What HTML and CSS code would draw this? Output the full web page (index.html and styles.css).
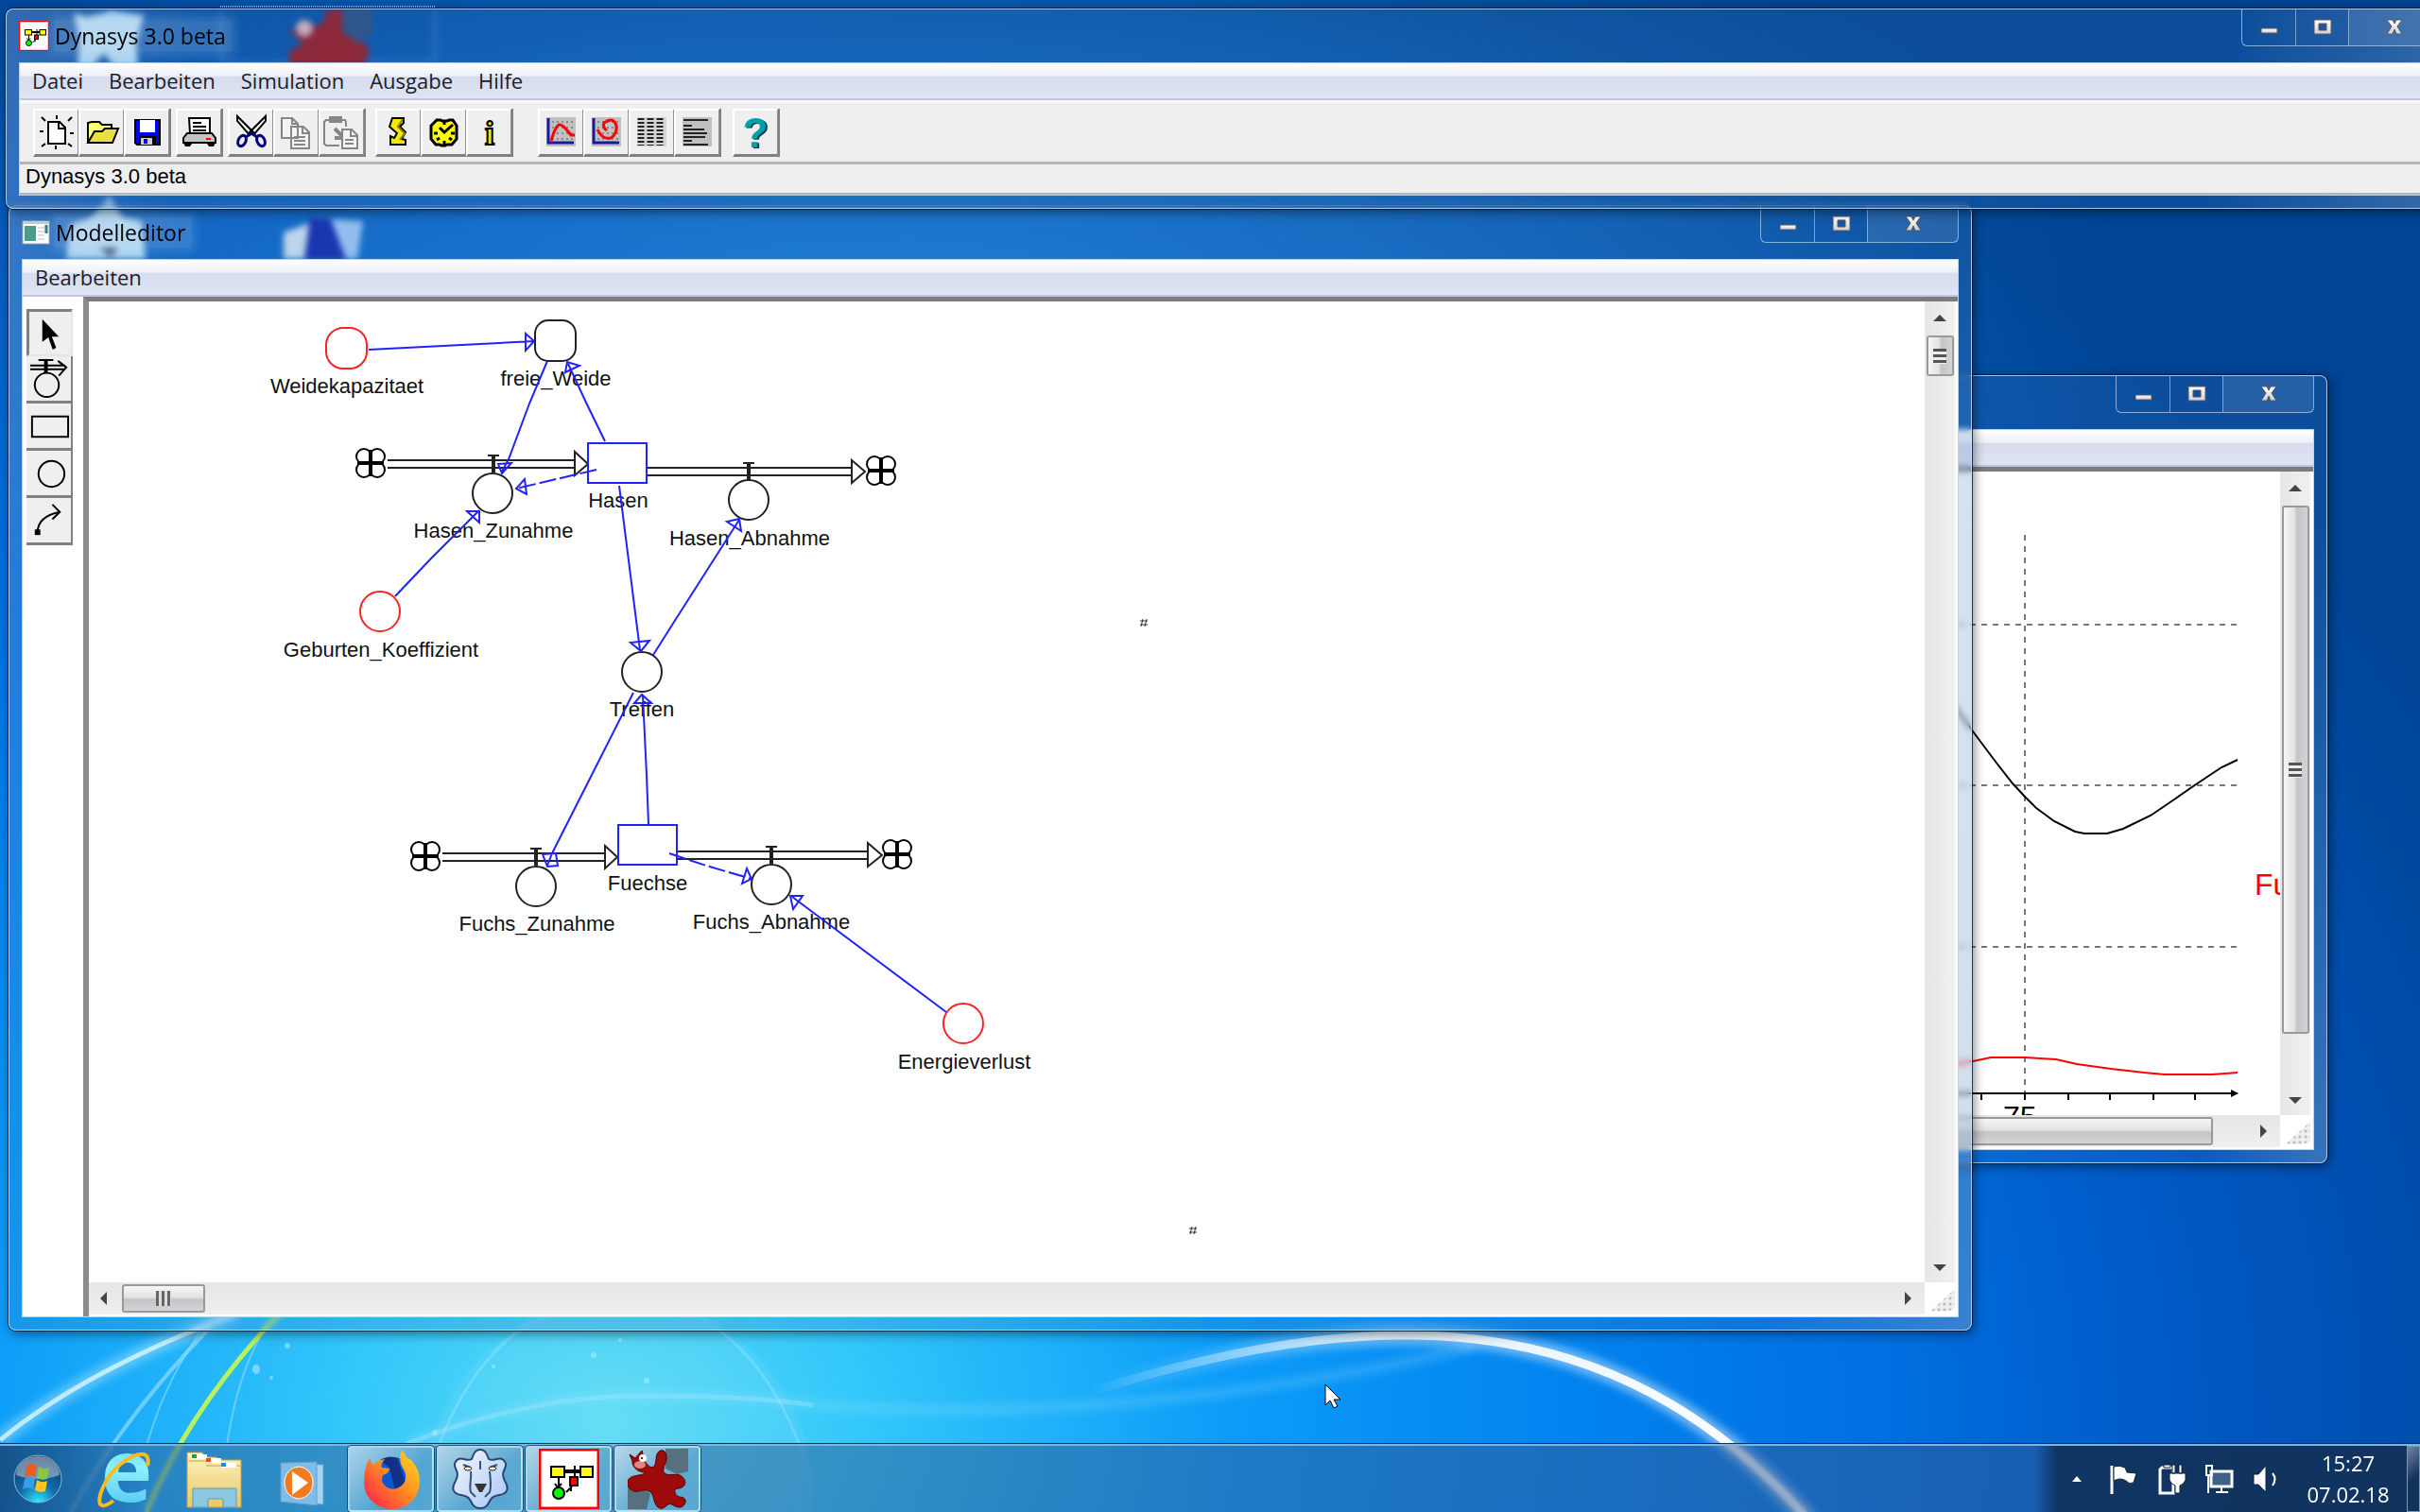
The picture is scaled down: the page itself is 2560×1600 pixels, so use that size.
FILE: index.html
```
<!DOCTYPE html>
<html lang="de">
<head>
  <meta charset="UTF-8">
  <title>Dynasys 3.0 beta</title>
  <link rel="stylesheet" href="styles.css">
</head>
<body>

  <!-- shared icons -->
  <svg class="defs" aria-hidden="true">
    <defs>
      <linearGradient id="metal" x1="0" y1="0" x2="0" y2="1"><stop offset="0" stop-color="#fff"/><stop offset="1" stop-color="#cfd0d2"/></linearGradient>
      <linearGradient id="curveLight" x1="0" y1="0" x2="1" y2="0"><stop offset="0" stop-color="#fff" stop-opacity="0"/><stop offset="0.4" stop-color="#fff" stop-opacity="0.8"/><stop offset="1" stop-color="#fff"/></linearGradient>
      <radialGradient id="orb" cx="0.5" cy="1" r="0.9"><stop offset="0" stop-color="#2ff0ff"/><stop offset="0.45" stop-color="#0f6fae"/><stop offset="1" stop-color="#123a66"/></radialGradient>
      <linearGradient id="fox" x1="1" y1="0" x2="0" y2="1"><stop offset="0" stop-color="#ffe226"/><stop offset="0.45" stop-color="#ff9020"/><stop offset="1" stop-color="#ff1650"/></linearGradient>
      <linearGradient id="lionFur" x1="0" y1="0" x2="1" y2="1"><stop offset="0" stop-color="#f4f8ff"/><stop offset="1" stop-color="#a8c6f4"/></linearGradient>
      <linearGradient id="folder" x1="0" y1="0" x2="0" y2="1"><stop offset="0" stop-color="#fff3c0"/><stop offset="1" stop-color="#e6c766"/></linearGradient>
      <linearGradient id="ie" x1="0" y1="0" x2="0" y2="1"><stop offset="0" stop-color="#46b8f0"/><stop offset="0.5" stop-color="#8ff0ff"/><stop offset="1" stop-color="#38b4ee"/></linearGradient>
      <filter id="soft"><feGaussianBlur stdDeviation="5"/></filter>
      <symbol id="min" viewBox="0 0 22 20"><rect x="3" y="11" width="17" height="5" fill="url(#metal)" stroke="#5a5560"/></symbol>
      <symbol id="max" viewBox="0 0 22 20"><path d="M2 2h18v15H2zM7 6v7h8V6z" fill="url(#metal)" fill-rule="evenodd" stroke="#5a5560"/></symbol>
      <symbol id="close" viewBox="0 0 22 20"><path d="M3 2h6l2 4 2-4h6l-5 7 5 8h-6l-2-5-2 5H3l5-8z" fill="url(#metal)" stroke="#5a5560"/></symbol>
      <symbol id="cloud" viewBox="-17 -17 34 34">
        <g fill="#fff" stroke="#000" stroke-width="2"><circle cx="-7" cy="-7" r="8"/><circle cx="7" cy="-7" r="8"/><circle cx="-7" cy="7" r="8"/><circle cx="7" cy="7" r="8"/></g>
        <path d="M-7-7h14v14H-7z" fill="#fff"/><path d="M0-14v28M-14 0h28" stroke="#000" stroke-width="4"/>
      </symbol>
      <symbol id="mark" viewBox="0 0 10 10"><path d="M4 1L2 9M8 1L6 9M1 3h8M1 7h8" stroke="#333" stroke-width="1" fill="none"/></symbol>
      <symbol id="dynasys" viewBox="0 0 64 64">
        <rect x="1" y="1" width="62" height="62" fill="#fff" stroke="#f00" stroke-width="3"/>
        <path d="M27 24h18M21 30v16M38 18v14M29 46l6-6M17 37l3 4 4-4M34 40v5" stroke="#000" stroke-width="2" fill="none"/><path d="M27 24h17" stroke="#000" stroke-width="4"/>
        <rect x="13" y="19" width="14" height="11" fill="#ff0" stroke="#000" stroke-width="2"/><rect x="44" y="19" width="13" height="11" fill="#ff0" stroke="#000" stroke-width="2"/>
        <rect x="33" y="30" width="8" height="9" fill="#f00" stroke="#000" stroke-width="2"/><ellipse cx="21" cy="47" rx="6" ry="6" fill="#0f0" stroke="#000" stroke-width="2"/>
      </symbol>
      <symbol id="lion" viewBox="0 0 60 64">
        <path d="M30 1c5 0 7 4 9 10 5 3 9-2 14 0 4 2 5 6 3 10-2 4-3 7 0 13 3 5 4 9 1 12-3 4-9 2-13 5-4 2-4 5-6 8-2 3-4 4-8 4s-6-1-8-4c-2-3-2-6-6-8-4-3-10-1-13-5-3-3-2-7 1-12 3-6 2-9 0-13-2-4-1-8 3-10 5-2 9 3 14 0 2-6 4-10 9-10z" fill="url(#lionFur)" stroke="#2b4470" stroke-width="2"/>
        <path d="M20 24c1 8-2 16 0 22l5 5M40 24c1 8 2 16 0 22l-5 5M30 13v9M12 17l8 3M48 17l-8 3" stroke="#34507c" stroke-width="2" fill="none"/>
        <ellipse cx="17" cy="21" rx="4" ry="2" fill="#f4f0c8" stroke="#222"/><ellipse cx="43" cy="21" rx="4" ry="2" fill="#f4f0c8" stroke="#222"/>
        <path d="M24 37h13l-5 9h-3z" fill="#333"/>
      </symbol>
      <symbol id="devil" viewBox="0 0 64 64">
        <path d="M40 0h24v24l-12 3-12-6zM0 40l14-4 10 12-4 16H0z" fill="#56707f"/>
        <path d="M2 6l6 4 7-8 3 11c3 4 5 8 10 6 3-5 1-13 5-16 5-4 9 2 8 8-1 6-4 9-3 14 5 6 14-1 20 5 5 5 3 11-4 12-7 0-4 7 0 9 6 0 9 3 6 8-3 5-9 3-13 0-6-3-8 8-15 3-6-6-3-13-9-17-6-4-13 4-20-2-6-6-3-13 4-14 7-2 10-1 11-4-9 0-14-8-13-12z" fill="#9c0a0a" stroke="#5c0000"/>
        <ellipse cx="13" cy="17" rx="6" ry="4" fill="#d88"/><circle cx="16" cy="10" r="4" fill="#fff"/><circle cx="15" cy="10" r="1" fill="#000"/>
      </symbol>
    </defs>
  </svg>

  <div class="desktop">
    <svg class="wallpaper" aria-hidden="true">
      <circle cx="655" cy="1580" r="205" fill="#fff" opacity="0.06"/>
      <path d="M460 1540Q520 1375 655 1375T850 1540" stroke="#c8f4ff" stroke-width="3" opacity="0.25" fill="none"/>
      <path d="M430 1528Q560 1477 680 1477T860 1487Q1200 1510 1560 1425" stroke="#9fe4ff" stroke-width="10" opacity="0.25" fill="none" filter="url(#soft)"/>
      <path d="M430 1528Q560 1477 680 1477T860 1487" stroke="#9fe4ff" stroke-width="5" opacity="0.4" fill="none"/>
      <path d="M0 1524Q90 1450 250 1390" stroke="#c8f2ff" stroke-width="16" opacity="0.4" fill="none" filter="url(#soft)"/>
      <path d="M0 1524Q90 1450 250 1390" stroke="#d8f6ff" stroke-width="5" fill="none" opacity="0.8"/>
      <path d="M75 1600Q130 1500 222 1405" stroke="#8fdcff" stroke-width="4" fill="none" opacity="0.7"/>
      <path d="M155 1530Q175 1460 215 1405M240 1530Q250 1460 275 1415" stroke="#8fdcff" stroke-width="2" fill="none" opacity="0.6"/>
      <path d="M155 1600Q200 1490 300 1385" stroke="#b8f060" stroke-width="5" fill="none"/>
      <path d="M1150 1474C1500 1362 1730 1402 1915 1610" stroke="url(#curveLight)" stroke-width="20" opacity="0.5" fill="none" filter="url(#soft)"/>
      <path d="M1150 1474C1500 1362 1730 1402 1915 1610" stroke="url(#curveLight)" stroke-width="9" fill="none"/>
      <g fill="#aee8ff" opacity="0.6"><ellipse cx="271" cy="1449" rx="4" ry="5"/><circle cx="287" cy="1458" r="2"/><circle cx="304" cy="1424" r="3"/><circle cx="628" cy="1434" r="3"/><circle cx="656" cy="1418" r="2"/><circle cx="684" cy="1461" r="3"/><circle cx="522" cy="1446" r="2"/><circle cx="460" cy="1516" r="3"/></g>
      <!-- desktop shortcuts seen through the glass -->
      <path d="M234 12V66H460V12" stroke="#fff" stroke-width="2" opacity="0.25" fill="rgba(0,0,0,0.12)"/>
      <path d="M233 7h227" stroke="#d8a860" stroke-width="2" stroke-dasharray="1 1"/>
      <path d="M78 14l14 4 26-6 34 4-8 30 2 24h-26l-10-14-12 14H82l2-26z" fill="#c4ecff"/>
      <path d="M302 30l12 4 8-14 10 8 10-4 3-12 16-2 4 26 14 4 12 12-6 20h-80l2-18 14-8z" fill="#a0151a"/><path d="M362 10h32v26l-14 10-18-12z" fill="#2c4f80"/><circle cx="322" cy="30" r="9" fill="#e6b7bd"/>
      <path d="M116 208l14 22 20 4 4 40H70l4-36 22-8z" fill="#c4ecff"/><path d="M105 262h20l-8 10z" fill="#345"/>
      <path d="M300 246l28-10v38h-28z" fill="#dcecf8"/><path d="M328 230l56 4-6 40h-54z" fill="#a8d0fc"/><path d="M328 230l22 2 16 42h-44z" fill="#1226ae"/>
    </svg>

    <!-- chart window -->
    <section class="window chart-window" aria-label="Ausgabe">
      <header class="titlebar">
        <div class="controls">
          <button aria-label="Minimieren"><svg><use href="#min"/></svg></button>
          <button aria-label="Maximieren"><svg><use href="#max"/></svg></button>
          <button aria-label="Schließen"><svg><use href="#close"/></svg></button>
        </div>
      </header>
      <div class="client">
        <nav class="menubar"></nav>
        <div class="pane">
          <div class="view">
            <svg class="plot">
              <g transform="translate(-1315 -500)" fill="none">
                <g stroke="#777" stroke-width="2" stroke-dasharray="6 6"><path d="M2142 567V1158M1400 662H2367M1400 832H2367M1400 1003H2367"/></g>
                <path d="M2060 738L2087 775L2111 807L2129 830L2142 844L2154 856L2173 870L2195 881L2205 883H2229L2246 878L2275 864L2300 847L2323 831L2350 813L2367 805" stroke="#000" stroke-width="2"/>
                <path d="M2060 1128L2087 1124L2106 1120H2142L2175 1122L2197 1127L2233 1132L2268 1136L2290 1138H2340L2367 1136" stroke="#f00" stroke-width="2"/>
                <path d="M1400 1158H2367M2096 1158v7M2142 1158v7M2188 1158v7M2232 1158v7M2278 1158v7M2322 1158v7" stroke="#000" stroke-width="2"/>
                <path d="M2360 1154l8 4-8 4z" fill="#000"/>
                <text x="2119" y="1194" fill="#000" font-size="32">75</text>
                <text x="2385" y="948" fill="#f00" font-size="32">Fu</text>
              </g>
            </svg>
          </div>
          <div class="vscroll"><i class="up"></i><b class="thumb"></b><i class="down"></i></div>
          <div class="hscroll"><b class="thumb"></b><i class="right"></i></div>
          <div class="grip"></div>
        </div>
      </div>
    </section>

    <!-- model editor -->
    <section class="window editor-window" aria-label="Modelleditor">
      <header class="titlebar">
        <svg class="title-icon small" viewBox="0 0 30 26"><rect x="1" y="1" width="28" height="24" fill="#fff" stroke="#9aa"/><path d="M1 3h28" stroke="#bcc" stroke-width="2"/><rect x="3" y="6" width="12" height="16" fill="#4f9a8c"/><path d="M17 8h7M17 12h7M17 16h7M17 20h7" stroke="#bbb"/><path d="M26 5v9" stroke="#357a90" stroke-width="3"/></svg>
        <h2>Modelleditor</h2>
        <div class="controls">
          <button aria-label="Minimieren"><svg><use href="#min"/></svg></button>
          <button aria-label="Maximieren"><svg><use href="#max"/></svg></button>
          <button aria-label="Schließen"><svg><use href="#close"/></svg></button>
        </div>
      </header>
      <div class="client">
        <nav class="menubar"><button>Bearbeiten</button></nav>
        <div class="editor">
          <div class="tools">
            <button class="tool active" aria-label="Auswahl"><svg viewBox="0 0 48 48"><path d="M15 8v26l7-5 5 14 4-2-5-13h8z"/></svg></button>
            <button class="tool" aria-label="Fluss"><svg viewBox="0 0 48 48"><path d="M4 10h38M4 14h38M13 4h16M34 5l9 7-8 9" fill="none" stroke="#000" stroke-width="2"/><path d="M21 3v15" stroke="#000" stroke-width="4"/><circle cx="22" cy="31" r="13" fill="none" stroke="#000" stroke-width="2"/></svg></button>
            <button class="tool" aria-label="Zustand"><svg viewBox="0 0 48 48"><rect x="6" y="14" width="39" height="22" fill="none" stroke="#000" stroke-width="2"/></svg></button>
            <button class="tool" aria-label="Konverter"><svg viewBox="0 0 48 48"><circle cx="27" cy="25" r="14" fill="none" stroke="#000" stroke-width="2"/></svg></button>
            <button class="tool" aria-label="Wirkung"><svg viewBox="0 0 48 48"><path d="M12 37Q12 20 36 15M28 7l8 8-8 8" fill="none" stroke="#000" stroke-width="2"/><rect x="9" y="34" width="6" height="6"/></svg></button>
          </div>
          <div class="pane">
            <div class="view">
              <svg class="model">
                <g transform="translate(-94 -319)">
                  <!-- pipes -->
                  <g class="pipe">
                    <path d="M410 487H608M410 495H608M608 478L622 491L608 503Z"/>
                    <path d="M684 495H901M684 503H901M901 487L915 499L901 511Z"/>
                    <path d="M468 903H640M468 911H640M640 895L653 907L640 919Z"/>
                    <path d="M716 901H918M716 909H918M918 892L933 905L918 917Z"/>
                  </g>
                  <g class="valve">
                    <path d="M516 482h12M561 898h12M786 490h12M810 896h12" stroke-width="2"/>
                    <path d="M522 482v18M792 490v18M567 898v18M816 896v18" stroke-width="4"/>
                  </g>
                  <use href="#cloud" x="375" y="473" width="34" height="34"/><use href="#cloud" x="915" y="481" width="34" height="34"/>
                  <use href="#cloud" x="433" y="889" width="34" height="34"/><use href="#cloud" x="932" y="887" width="34" height="34"/>
                  <!-- stocks -->
                  <rect class="stock" x="622" y="469" width="62" height="42"/>
                  <rect class="stock" x="654" y="873" width="62" height="42"/>
                  <!-- converters -->
                  <g class="node"><rect x="566" y="339" width="43" height="43" rx="14"/><circle cx="521" cy="522" r="21"/><circle cx="792" cy="529" r="21"/><circle cx="679" cy="711" r="21"/><circle cx="567" cy="938" r="21"/><circle cx="816" cy="936" r="21"/></g>
                  <g class="node constant"><rect x="345" y="347" width="43" height="43" rx="18"/><circle cx="402" cy="647" r="21"/><circle cx="1019" cy="1083" r="21"/></g>
                  <g class="label">
                    <text x="367" y="416">Weidekapazitaet</text><text x="588" y="408">freie_Weide</text>
                    <text x="522" y="569">Hasen_Zunahme</text><text x="654" y="537">Hasen</text><text x="793" y="577">Hasen_Abnahme</text>
                    <text x="403" y="695">Geburten_Koeffizient</text><text x="679" y="758">Treffen</text>
                    <text x="568" y="985">Fuchs_Zunahme</text><text x="685" y="942">Fuechse</text><text x="816" y="983">Fuchs_Abnahme</text>
                    <text x="1020" y="1131">Energieverlust</text>
                  </g>
                  <!-- links -->
                  <g class="link">
                    <path d="M390 370L565 361M556 353V371L565 361Z"/>
                    <path d="M579 382L560 427L538 486L531 499M527 491L541 490L531 501Z"/>
                    <path d="M640 467L620 426L601 385M598 394L613 387L600 383Z"/>
                    <path d="M418 631L455 592L507 540M494 541H507V553Z"/>
                    <path d="M655 514L677 688M667 680L687 678L678 689Z"/>
                    <path d="M691 693L715 655L782 550M769 552L782 549L784 562Z"/>
                    <path d="M670 733L626 820L584 903L579 916M574 904L588 903L590 916L579 917Z"/>
                    <path d="M686 872L684 820L680 736M671 744H689L679 735Z"/>
                    <path d="M1001 1071L838 949M849 948H836L839 962Z"/>
                    <path class="broken" d="M631 497L546 517"/><path d="M555 507L557 523L546 517Z"/>
                    <path class="broken" d="M708 903L747 916L795 930"/><path d="M790 919L785 935L795 930Z"/>
                  </g>
                  <use href="#mark" x="1205" y="654" width="10" height="10"/><use href="#mark" x="1257" y="1297" width="10" height="10"/>
                </g>
              </svg>
            </div>
            <div class="vscroll"><i class="up"></i><b class="thumb"></b><i class="down"></i></div>
            <div class="hscroll"><i class="left"></i><b class="thumb"></b><i class="right"></i></div>
            <div class="grip"></div>
          </div>
        </div>
      </div>
    </section>

    <!-- main window -->
    <section class="window main-window" aria-label="Dynasys 3.0 beta">
      <header class="titlebar">
        <svg class="title-icon"><use href="#dynasys"/></svg>
        <h1>Dynasys 3.0 beta</h1>
        <div class="controls">
          <button aria-label="Minimieren"><svg><use href="#min"/></svg></button>
          <button aria-label="Maximieren"><svg><use href="#max"/></svg></button>
          <button aria-label="Schließen"><svg><use href="#close"/></svg></button>
        </div>
      </header>
      <div class="client">
        <nav class="menubar">
          <button>Datei</button><button>Bearbeiten</button><button>Simulation</button><button>Ausgabe</button><button>Hilfe</button>
        </nav>
        <div class="toolbar">
          <div class="group">
            <button aria-label="Neu"><svg viewBox="0 0 40 40"><path d="M11 9h12l6 6v17H11z" fill="#fff" stroke="#000" stroke-width="2"/><path d="M22 9v7h7M20 2v4M4 4l4 4M36 4l-4 4M2 19h4M34 21h4M4 35l4-3M36 35l-4-3M19 34v4" stroke="#000" stroke-width="2" fill="none"/></svg></button>
            <button aria-label="Öffnen"><svg viewBox="0 0 40 40"><path d="M5 31V10l4-1h8l3 3h10v5" fill="#ffff80" stroke="#000" stroke-width="2"/><path d="M5 31l7-12h8l3-3h14l-6 15z" fill="#e8e040" stroke="#000" stroke-width="2"/></svg></button>
            <button aria-label="Speichern"><svg viewBox="0 0 40 40"><path d="M7 7h26v26H9l-2-2z" fill="#00f" stroke="#000" stroke-width="2"/><rect x="12" y="7" width="16" height="13" fill="#fff"/><rect x="11" y="24" width="18" height="9" fill="#000"/><rect x="13" y="26" width="12" height="7" fill="#ccc"/><rect x="16" y="27" width="4" height="5" fill="#00f"/></svg></button>
          </div>
          <div class="group">
            <button aria-label="Drucken"><svg viewBox="0 0 40 40"><path d="M10 21l-1-16h22v16" fill="#fff" stroke="#000" stroke-width="2"/><path d="M13 10h9M13 14h14M13 18h14" stroke="#000" stroke-width="2"/><path d="M7 21h26l4 5v5H3v-5z" fill="#c4c4c4" stroke="#000" stroke-width="2"/><path d="M3 31h34l-2 4h-5l-2-3H12l-2 3H5z"/><path d="M27 27h5" stroke="#f00" stroke-width="2"/></svg></button>
          </div>
          <div class="group">
            <button aria-label="Ausschneiden"><svg viewBox="0 0 40 40"><path d="M5 3v5l13 15 4-3zM35 3v5L22 23l-4-3z" fill="#fff" stroke="#000" stroke-width="2"/><g fill="none" stroke="#000080" stroke-width="3"><ellipse cx="10" cy="29" rx="4" ry="6" transform="rotate(25 10 29)"/><ellipse cx="30" cy="29" rx="4" ry="6" transform="rotate(-25 30 29)"/><path d="M14 25l6-4 6 4"/></g></svg></button>
            <button aria-label="Kopieren"><svg viewBox="0 0 40 40"><g fill="#f4f4f4" stroke="#868686" stroke-width="2"><path d="M4 5h11l6 6v15H4zM14 14h13l6 6v17H14z"/><path d="M15 5v6h6M26 14v7h7M17 25h12M17 29h12M17 33h12" fill="none"/></g></svg></button>
            <button aria-label="Einfügen"><svg viewBox="0 0 40 40"><g fill="none" stroke="#868686" stroke-width="2"><path d="M6 7H3L1 9v23l2 2h14M20 7h3l1 2v5"/><path d="M7 4h12v5H7z" fill="#868686"/><path d="M12 16l9 9M22 16v10H12" stroke-width="4"/><path d="M20 17h10l6 6v14H20z" fill="#f4f4f4"/><path d="M29 17v7h6M23 28h9M23 32h9"/></g></svg></button>
          </div>
          <div class="group run">
            <button aria-label="Start"><svg viewBox="0 0 40 40"><path d="M13 5h12v5l-4 4 6 6-4 7 4 1v5H11v-9l4 2 3-5-8-7z" fill="#f4e800" stroke="#000" stroke-width="2"/><path d="M24 6l-5 8 7 7-5 7" stroke="#8a8200" stroke-width="2" fill="none"/></svg></button>
            <button aria-label="Zeit"><svg viewBox="0 0 40 40"><path d="M12 7h4l2 1h5l2-1h4l4 6v14l-5 6h-5l-2 1h-4l-2-1h-4l-5-6V13z" fill="#ff0" stroke="#000" stroke-width="3"/><path d="M15 15l5 5 9-8M20 9v3M9 21h4M27 21h4M20 29v4M12 28l3-2M28 28l-3-2" stroke="#000" stroke-width="3" fill="none"/></svg></button>
            <button aria-label="Info"><svg viewBox="0 0 40 40"><text x="20" y="33" class="glyph-info">i</text></svg></button>
          </div>
          <div class="group output">
            <button aria-label="Zeitdiagramm"><svg viewBox="0 0 40 40"><rect x="4" y="4" width="31" height="31" fill="#c0c0c0"/><path d="M10 9h24M10 15h24M10 21h24M10 27h24" stroke="#888" stroke-width="2" stroke-dasharray="2 3"/><path d="M6 5v26h27" stroke="#1a1a9a" stroke-width="3" fill="none"/><path d="M9 29q5-17 9-17 3 0 8 6l4 5h4" stroke="#f00" stroke-width="3" fill="none"/></svg></button>
            <button aria-label="Phasendiagramm"><svg viewBox="0 0 40 40"><rect x="4" y="4" width="31" height="31" fill="#c0c0c0"/><path d="M10 9h24M10 15h24M10 21h24M10 27h24" stroke="#888" stroke-width="2" stroke-dasharray="2 3"/><path d="M6 5v26h27" stroke="#1a1a9a" stroke-width="3" fill="none"/><path d="M20 18q-5-3-3-8 10-7 13 3 1 9-6 13-9 2-14-9" stroke="#f00" stroke-width="3" fill="none"/></svg></button>
            <button aria-label="Tabelle"><svg viewBox="0 0 40 40"><rect x="4" y="4" width="31" height="31" fill="#d4d4d4"/><path d="M8 5v29M18 5v29M28 5v29" stroke="#222" stroke-width="7" stroke-dasharray="2 2"/></svg></button>
            <button aria-label="Text"><svg viewBox="0 0 40 40"><rect x="4" y="4" width="31" height="31" fill="#c0c0c0"/><path d="M5 7h26M5 13h9M5 17h22M5 21h25M5 25h23M5 29h9M5 33h26" stroke="#222" stroke-width="2"/></svg></button>
          </div>
          <div class="group help">
            <button aria-label="Hilfe"><svg viewBox="0 0 40 40"><text x="19" y="36" class="glyph-help">?</text></svg></button>
          </div>
        </div>
        <div class="status">Dynasys 3.0 beta</div>
      </div>
    </section>

    <svg class="cursor" viewBox="0 0 18 28"><path d="M1 1v22l5-5 4 8 4-2-4-7h7z" fill="#fff" stroke="#000"/></svg>

    <!-- taskbar -->
    <footer class="taskbar">
      <button class="start" aria-label="Start"><svg viewBox="0 0 52 52"><circle cx="26" cy="26" r="25" fill="url(#orb)" stroke="#8ab4d4"/><path d="M3 22a23 20 0 0 1 46 0q-23 8-46 0" fill="#fff" opacity="0.4"/><path d="M14 12q5-4 11 0l-2 12q-5-3-11 0z" fill="#ee5a24"/><path d="M27 13q6 4 11 1l-2 12q-6 2-11-1z" fill="#8cc63e"/><path d="M12 26q5-4 11 0l-2 11q-5-3-11 0z" fill="#3a9be8"/><path d="M25 27q6 4 11 1l-2 11q-6 2-11-1z" fill="#fdc51c"/></svg></button>
      <button class="task" aria-label="Internet Explorer"><svg viewBox="0 0 64 64"><text x="34" y="56" class="glyph-ie">e</text><path d="M56 18C60 2 46 2 28 16S0 58 8 60q4 1 12-5" fill="none" stroke="#f8bc1c" stroke-width="4"/></svg></button>
      <button class="task" aria-label="Explorer"><svg viewBox="0 0 64 64"><path d="M4 4h16l3 5h12l2 3h24v50H4z" fill="url(#folder)" stroke="#c8a040"/><path d="M6 13h30M24 18h36" stroke="#c8a040"/><path d="M9 6h16v5H9zM24 10h16v5H24zM40 15h16v5H40z" fill="#fff"/><path d="M9 6h5v4H9z" fill="#1e9e3e"/><path d="M24 10h5v4h-5z" fill="#e8501c"/><path d="M40 15h5v4h-5z" fill="#2888e0"/><path d="M10 42h46v20H42v-9H26v9H10z" fill="#8cc8e0" stroke="#5a9cb8"/></svg></button>
      <button class="task" aria-label="Media Player"><svg viewBox="0 0 64 64"><path d="M18 15l36 2v42l-36-2z" fill="#a6d4f0" stroke="#5aa0d0"/><path d="M9 15l38-1v46L9 56z" fill="#7fbce8" stroke="#5aa0d0"/><ellipse cx="28" cy="36" rx="15" ry="17" fill="#f47a20" stroke="#fff"/><path d="M21 24l17 12-17 13z" fill="#fff"/></svg></button>
      <button class="task open" aria-label="Firefox"><svg viewBox="0 0 64 64"><circle cx="34" cy="31" r="22" fill="#0a58d0"/><path d="M38 10q-8-4-18 2l10 8 6 24 12-6z" fill="#12308a"/><path d="M9 10q2 6 4 7 5-5 12-6-5 6-3 9l8 1q0 5-7 7-3 7 3 12 7 5 14 1 10-6 6-17-8-11-3-23 3 4 5 8l5 3q9 10 9 22c0 18-13 30-29 30S3 52 3 36q0-16 6-26z" fill="url(#fox)"/></svg></button>
      <button class="task open" aria-label="Lion"><svg viewBox="0 0 60 64"><use href="#lion"/></svg></button>
      <button class="task open" aria-label="Dynasys"><svg viewBox="0 0 64 64"><use href="#dynasys"/></svg></button>
      <button class="task open" aria-label="Teufel"><svg viewBox="0 0 64 64"><use href="#devil"/></svg></button>
      <div class="tray">
        <button aria-label="Ausgeblendete Symbole"><svg viewBox="0 0 34 34"><path d="M12 20h10l-5-6z" fill="#fff"/></svg></button>
        <button aria-label="Wartungscenter"><svg viewBox="0 0 34 34"><path d="M4 3v30" stroke="#fff" stroke-width="3"/><path d="M6 4q6-2 12 1l2 5 10 1-3 10q-5 2-8-2-6-4-13 0z" fill="#fff" stroke="#123"/></svg></button>
        <button aria-label="Akku"><svg viewBox="0 0 34 34"><path d="M7 5h12v27H5V7z" fill="none" stroke="#fff" stroke-width="3"/><path d="M9 2h7v3H9zM18 2h3v9h-3zM25 2h3v9h-3zM15 11h17v7q-2 5-6 6v8h-5v-8q-4-1-6-6z" fill="#fff" stroke="#123"/></svg></button>
        <button aria-label="Netzwerk"><svg viewBox="0 0 34 34"><rect x="9" y="9" width="22" height="16" fill="#3d6288" stroke="#fff" stroke-width="3"/><path d="M4 3h6v10H4zM6 13v19M14 31h13M20 26v5" fill="none" stroke="#fff" stroke-width="2"/></svg></button>
        <button aria-label="Lautstärke"><svg viewBox="0 0 34 34"><path d="M4 12h5l8-9v28l-8-8H4z" fill="#fff" stroke="#123"/><path d="M24 11q5 6 0 13" stroke="#fff" stroke-width="2" fill="none"/></svg></button>
        <time class="clock"><span>15:27</span><span>07.02.18</span></time>
        <button class="peek" aria-label="Desktop anzeigen"></button>
      </div>
    </footer>
  </div>

</body>
</html>
```
FILE: styles.css
```
* {
  box-sizing: border-box;
}
body {
  margin: 0;
  font-family: "Open Sans", "Noto Sans", sans-serif;
  font-size: 22px;
  color: #000;
}
button {
  margin: 0;
  padding: 0;
  border: none;
  background: none;
  font: inherit;
  color: inherit;
}
h1, h2 {
  margin: 0;
  font-size: 23px;
  font-weight: normal;
}
svg {
  display: block;
}
.defs {
  position: absolute;
  width: 0;
  height: 0;
}
.desktop {
  position: relative;
  height: 100vh;
  overflow: hidden;
  background:
    radial-gradient(ellipse 50% 30% at 38% 20%, rgba(50, 160, 230, 0.5), transparent),
    radial-gradient(ellipse 86% 103% at 25% 94%, #5cdcf4 0, #34c8fa 12%, #0c9cf8 30%, #0284f0 46%, #006ee0 62%, #0056c0 78%, #004ca8 90%, #004494 100%);
}
.wallpaper {
  position: absolute;
  inset: 0;
  width: 100%;
  height: 100%;
}

/* windows */
.window {
  position: absolute;
  display: flex;
  flex-direction: column;
  padding: 0 13px 13px;
  border: 1px solid rgba(200, 230, 255, 0.8);
  border-radius: 8px;
  background: linear-gradient(100deg, rgba(130, 160, 205, 0.4) 0, rgba(60, 120, 190, 0.2) 8%, rgba(60, 120, 190, 0.2) 90%, rgba(140, 170, 200, 0.4) 100%);
  box-shadow: 0 0 0 1px rgba(0, 20, 50, 0.8), 2px 3px 12px rgba(0, 0, 0, 0.5);
  backdrop-filter: blur(3px);
}
.main-window {
  left: 6px;
  right: -35px;
  top: 9px;
}
.editor-window {
  left: 9px;
  right: 474px;
  top: 217px;
  bottom: 192px;
}
.chart-window {
  left: 1300px;
  right: 98px;
  top: 397px;
  bottom: 369px;
}
.titlebar {
  display: flex;
  height: 56px;
  flex: none;
}
.titlebar h1,
.titlebar h2 {
  align-self: center;
  margin-left: 6px;
  padding-right: 6px;
  line-height: 32px;
  background: rgba(255, 255, 255, 0.15);
  box-shadow: 0 0 10px 4px rgba(255, 255, 255, 0.15);
}
.title-icon {
  align-self: center;
  width: 32px;
  height: 32px;
}
.title-icon.small {
  width: 30px;
  height: 26px;
}
.controls {
  display: flex;
  height: 39px;
  margin-left: auto;
  border: 1px solid rgba(190, 215, 240, 0.7);
  border-top: none;
  border-radius: 0 0 6px 6px;
}
.controls button {
  display: flex;
  align-items: center;
  justify-content: center;
  width: 56px;
}
.controls button + button {
  border-left: 1px solid rgba(190, 215, 240, 0.6);
}
.controls button:last-child {
  width: 96px;
  background: rgba(255, 255, 255, 0.1);
}
.controls svg {
  width: 22px;
  height: 20px;
}
.client {
  display: flex;
  flex: 1;
  flex-direction: column;
  min-height: 0;
  border: 1px solid #b8d4ee;
  background: #fff;
}
.menubar {
  display: flex;
  flex: none;
  height: 39px;
  border-bottom: 2px solid #c2c6d8;
  background: linear-gradient(#fff 0, #eef0f8 35%, #d6dbee 40%, #e0e5f5 100%);
  color: #1c1c28;
}
.menubar button {
  padding: 0 14px 0 13px;
  line-height: 37px;
}

/* main toolbar */
.toolbar {
  display: flex;
  gap: 5px;
  padding: 6px 14px 5px;
  border-top: 3px solid #fafafa;
  border-bottom: 3px solid #b4b4b4;
  background: #efefef;
}
.group {
  display: flex;
  border-right: 2px solid #808080;
}
.group.run {
  margin-left: 5px;
}
.group.output {
  margin-left: 21px;
}
.group.help {
  margin-left: 7px;
}
.group button {
  display: flex;
  align-items: center;
  justify-content: center;
  width: 48px;
  height: 51px;
  border: 2px solid #fff;
  border-right: 1px solid #909090;
  border-bottom: 3px solid #808080;
}
.group svg {
  width: 40px;
  height: 40px;
  overflow: visible;
}
.glyph-info {
  font: bold 36px "Liberation Serif", serif;
  text-anchor: middle;
  fill: #f0e400;
  stroke: #000;
  stroke-width: 2px;
}
.glyph-help {
  font: bold 44px "Liberation Sans", sans-serif;
  text-anchor: middle;
  fill: #00a0a8;
  filter: drop-shadow(2px 1px 0 #003c60);
}
.status {
  padding: 0 6px 4px;
  border-bottom: 2px solid #b4b4b4;
  background: #efefef;
  font-family: "Liberation Sans", Arial, sans-serif;
  line-height: 26px;
}

/* model editor */
.editor {
  display: flex;
  flex: 1;
  min-height: 0;
}
.tools {
  flex: none;
  width: 64px;
  padding: 13px 0 0 4px;
}
.tool {
  display: block;
  width: 49px;
  height: 50px;
  border-right: 2px solid #808080;
  border-bottom: 3px solid #808080;
  background: #efefef;
}
.tool.active {
  border: 2px solid #e4e4e4;
  border-top: 3px solid #808080;
  border-left: 3px solid #808080;
}
.tool svg {
  width: 100%;
  height: 100%;
}
.pane {
  display: grid;
  flex: 1;
  grid-template-columns: 1fr 32px;
  grid-template-rows: 1fr 34px;
  min-width: 0;
  min-height: 0;
  padding-right: 3px;
  padding-bottom: 2px;
  border-top: 5px solid #7c7c7c;
  border-left: 6px solid #8c8c8c;
}
.chart-window .pane {
  border-left: none;
}
.view {
  overflow: hidden;
  background: #fff;
}
.view svg {
  width: 100%;
  height: 100%;
  font-family: "Liberation Sans", Arial, sans-serif;
}
.pipe {
  fill: #fff;
  stroke: #222;
  stroke-width: 2px;
}
.valve {
  fill: none;
  stroke: #222;
}
.stock {
  fill: #fff;
  stroke: #22f;
  stroke-width: 2px;
}
.node {
  fill: #fff;
  stroke: #222;
  stroke-width: 2px;
}
.node.constant {
  stroke: #f22;
}
.link {
  fill: none;
  stroke: #22f;
  stroke-width: 2px;
}
.broken {
  stroke-dasharray: 18 4;
}
.label {
  font-size: 22px;
  text-anchor: middle;
  fill: #111;
}

/* scrollbars */
.vscroll,
.hscroll {
  display: flex;
  align-items: center;
  background: linear-gradient(90deg, #e6e6e6, #f0f0f0);
}
.vscroll {
  flex-direction: column;
}
.hscroll {
  background: linear-gradient(#e6e6e6, #efefef);
}
.up, .down, .left, .right {
  width: 0;
  height: 0;
  border: 7px solid transparent;
}
.up {
  margin: 7px 0 15px;
  border-bottom-color: #444;
}
.down {
  margin: auto 0 5px;
  border-top-color: #444;
}
.left {
  margin: 0 16px 0 5px;
  border-right-color: #444;
}
.right {
  margin: 0 7px 0 auto;
  border-left-color: #444;
}
.thumb {
  display: flex;
  align-items: center;
  justify-content: center;
  border: 2px solid #999;
  border-radius: 3px;
}
.vscroll .thumb {
  width: 29px;
  height: 43px;
  background: linear-gradient(90deg, #f6f6f6, #e2e2e4 45%, #c4c4c8 55%, #d4d4d6);
}
.chart-window .vscroll .thumb {
  height: 559px;
}
.hscroll .thumb {
  width: 88px;
  height: 30px;
  background: linear-gradient(#f6f6f6, #e2e2e4 45%, #c4c4c8 55%, #d4d4d6);
}
.chart-window .hscroll .thumb {
  width: 1000px;
  margin-left: 26px;
}
.vscroll .thumb::after {
  content: "";
  width: 14px;
  height: 16px;
  background: repeating-linear-gradient(#555 0 3px, #eee 3px 6px);
}
.hscroll .thumb::after {
  content: "";
  width: 16px;
  height: 16px;
  background: repeating-linear-gradient(90deg, #666 0 3px, #ddd 3px 6px);
}
.grip {
  background: radial-gradient(circle at 3px 3px, #bbb 1px, transparent 2px) 12px 14px / 6px 6px, #efefef;
  clip-path: polygon(100% 20%, 100% 80%, 80% 90%, 20% 90%);
}

.cursor {
  position: absolute;
  left: 1401px;
  top: 1464px;
  width: 18px;
  height: 28px;
}

/* taskbar */
.taskbar {
  position: absolute;
  left: 0;
  right: 0;
  bottom: 0;
  display: flex;
  align-items: center;
  height: 72px;
  border-top: 2px solid #7fb4dc;
  background:
    linear-gradient(90deg, rgba(10, 40, 80, 0.5) 0, transparent 6%),
    rgba(50, 90, 145, 0.5);
  box-shadow: 0 -1px 0 #0c3058;
  backdrop-filter: blur(2px);
}
.start {
  padding: 0 20px 0 14px;
}
.start svg {
  width: 52px;
  height: 52px;
}
.task {
  display: flex;
  align-items: center;
  justify-content: center;
  width: 91px;
  height: 70px;
  margin-right: 3px;
}
.task svg {
  width: 64px;
  height: 64px;
  overflow: visible;
}
.task.open {
  border: 2px solid rgba(200, 235, 255, 0.7);
  border-radius: 4px;
  background: linear-gradient(135deg, rgba(255, 255, 255, 0.6), rgba(150, 210, 240, 0.3) 60%);
  box-shadow: 0 0 0 1px rgba(10, 40, 70, 0.7);
}
.glyph-ie {
  font: bold 92px "Open Sans", sans-serif;
  text-anchor: middle;
  fill: url(#ie);
}
.tray {
  display: flex;
  align-items: center;
  height: 70px;
  margin-left: auto;
  padding-left: 20px;
  background: linear-gradient(90deg, transparent, rgba(14, 40, 72, 0.75) 24px);
}
.tray button {
  width: 50px;
}
.tray svg {
  width: 34px;
  height: 34px;
  margin: 0 auto;
}
.clock {
  display: flex;
  flex-direction: column;
  width: 124px;
  text-align: center;
  color: #fff;
  line-height: 33px;
}
.tray .peek {
  width: 14px;
  height: 70px;
  border: 1px solid #7898b8;
  background: linear-gradient(135deg, rgba(255, 255, 255, 0.4), rgba(20, 50, 90, 0.6) 50%);
}
```
